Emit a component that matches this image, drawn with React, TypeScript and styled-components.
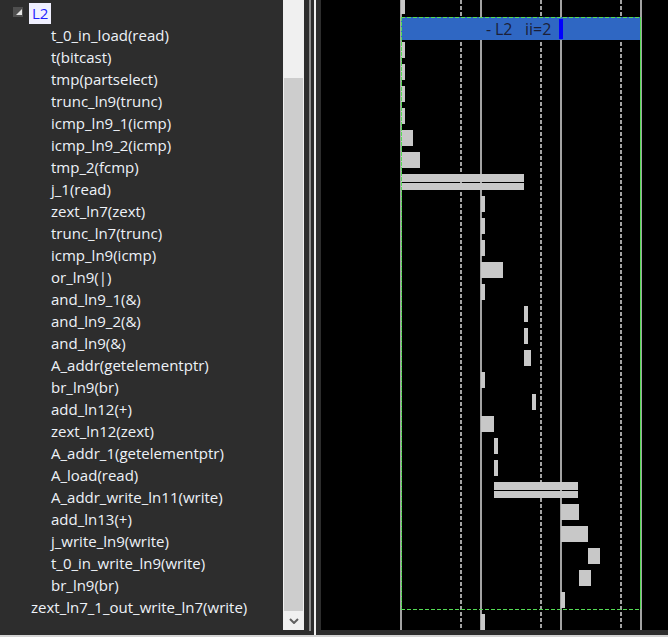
import React from "react";
import styled, { createGlobalStyle } from "styled-components";

const GlobalStyle = createGlobalStyle`
  html, body { margin: 0; padding: 0; background: #2d2d2d; }
  body { font-family: "Open Sans", "Noto Sans", sans-serif; }
`;

const Frame = styled.div`
  width: 668px;
  height: 637px;
  display: flex;
  flex-direction: column;
  background: #2d2d2d;
  overflow: hidden;
`;

const Main = styled.div`
  display: flex;
  flex-direction: row;
  height: 635px;
`;

const TreePanel = styled.div`
  width: 283px;
  height: 635px;
  padding-top: 2px;
  box-sizing: border-box;
  background: #2d2d2d;
  display: flex;
  flex-direction: column;
  overflow: hidden;
`;

const TreeRow = styled.div<{ $indent: number }>`
  height: 22px;
  display: flex;
  align-items: center;
  padding-left: ${(p) => p.$indent}px;
  color: #eef2f8;
  font-size: 15px;
  white-space: nowrap;
`;

const Expander = styled.div`
  width: 10px;
  height: 10px;
  margin-right: 6px;
  margin-top: -3px;
  background: #4f4f4f;
  position: relative;
  &::after {
    content: "";
    position: absolute;
    right: 1px;
    bottom: 2px;
    width: 0;
    height: 0;
    border-left: 6px solid transparent;
    border-bottom: 6px solid #e4e4e4;
  }
`;

const GroupLabel = styled.span`
  background: #f0f0ff;
  color: #1f1fff;
  height: 21px;
  line-height: 21px;
  padding: 0 3px;
  font-size: 15px;
`;

const ScrollColumn = styled.div`
  width: 21px;
  height: 635px;
  display: flex;
  flex-direction: column;
`;

const ScrollTrack = styled.div`
  height: 630px;
  background: #f0f0f0;
  display: flex;
  flex-direction: column;
`;

const ScrollSpace = styled.div`
  height: 78px;
`;

const ScrollThumb = styled.div`
  height: 533px;
  margin: 0 1px;
  background: #cdcdcd;
`;

const ScrollButton = styled.div`
  height: 19px;
  display: flex;
  align-items: center;
  justify-content: center;
`;

const Splitter = styled.div`
  width: 17px;
  height: 635px;
  display: flex;
  flex-direction: row;
  padding-left: 5px;
  box-sizing: border-box;
  gap: 3px;
`;

const SplitLine = styled.div<{ $color: string; $h: number }>`
  width: 2px;
  height: ${(p) => p.$h}px;
  background: ${(p) => p.$color};
`;

const TimelineColumn = styled.div`
  flex: 1;
  height: 635px;
  display: flex;
  flex-direction: column;
`;

const Chart = styled.div`
  height: 630px;
  background: #000;
  & svg { display: block; }
`;

const BottomLine = styled.div`
  height: 2px;
  background: #d4d4d4;
`;

const children = [
  "t_0_in_load(read)",
  "t(bitcast)",
  "tmp(partselect)",
  "trunc_ln9(trunc)",
  "icmp_ln9_1(icmp)",
  "icmp_ln9_2(icmp)",
  "tmp_2(fcmp)",
  "j_1(read)",
  "zext_ln7(zext)",
  "trunc_ln7(trunc)",
  "icmp_ln9(icmp)",
  "or_ln9(|)",
  "and_ln9_1(&)",
  "and_ln9_2(&)",
  "and_ln9(&)",
  "A_addr(getelementptr)",
  "br_ln9(br)",
  "add_ln12(+)",
  "zext_ln12(zext)",
  "A_addr_1(getelementptr)",
  "A_load(read)",
  "A_addr_write_ln11(write)",
  "add_ln13(+)",
  "j_write_ln9(write)",
  "t_0_in_write_ln9(write)",
  "br_ln9(br)",
];

type Bar = { y: number; x1: number; x2: number; dbl?: boolean };

const bars: Bar[] = [
  { y: -2, x1: 401, x2: 405 },
  { y: 42, x1: 401, x2: 405 },
  { y: 64, x1: 401, x2: 405 },
  { y: 86, x1: 401, x2: 405 },
  { y: 108, x1: 401, x2: 405 },
  { y: 130, x1: 401, x2: 413 },
  { y: 152, x1: 401, x2: 420 },
  { y: 174, x1: 401, x2: 524, dbl: true },
  { y: 196, x1: 481, x2: 485 },
  { y: 218, x1: 481, x2: 485 },
  { y: 240, x1: 481, x2: 485 },
  { y: 262, x1: 481, x2: 503 },
  { y: 284, x1: 481, x2: 485 },
  { y: 306, x1: 524, x2: 528 },
  { y: 328, x1: 524, x2: 528 },
  { y: 350, x1: 524, x2: 531 },
  { y: 372, x1: 481, x2: 485 },
  { y: 394, x1: 532, x2: 536 },
  { y: 416, x1: 481, x2: 494 },
  { y: 438, x1: 494, x2: 498 },
  { y: 460, x1: 494, x2: 498 },
  { y: 482, x1: 494, x2: 578, dbl: true },
  { y: 504, x1: 561, x2: 579 },
  { y: 526, x1: 561, x2: 588 },
  { y: 548, x1: 588, x2: 600 },
  { y: 570, x1: 579, x2: 591 },
  { y: 592, x1: 561, x2: 565 },
  { y: 614, x1: 481, x2: 485 },
];

const solidX = [401, 481, 561, 641];
const dashedX = [461, 541, 621];
const GREEN = "#55dd55";
const BAR = "#c8c8c8";

function Timeline() {
  return (
    <svg width={347} height={630} viewBox="321 0 347 630">
      {solidX.map((x) => (
        <rect key={"s" + x} x={x - 1} y={0} width={2} height={630} fill="#a3a3a3" />
      ))}
      {dashedX.map((x) => (
        <line
          key={"d" + x}
          x1={x}
          x2={x}
          y1={0}
          y2={630}
          stroke="#a3a3a3"
          strokeWidth={2}
          strokeDasharray="4 2"
        />
      ))}
      {bars.map((b, i) =>
        b.dbl ? (
          <g key={i}>
            <rect x={b.x1} y={b.y} width={b.x2 - b.x1} height={8} fill={BAR} />
            <rect x={b.x1} y={b.y + 9} width={b.x2 - b.x1} height={7} fill={BAR} />
          </g>
        ) : (
          <rect key={i} x={b.x1} y={b.y} width={b.x2 - b.x1} height={16} fill={BAR} />
        )
      )}
      <rect x={401} y={17} width={240} height={23} fill="#2f67c3" />
      <text
        y={35}
        fontSize={16}
        fill="#1b1f38"
        fontFamily='"Open Sans", "Noto Sans", sans-serif'
      >
        <tspan x={486}>-</tspan>
        <tspan x={495}>L2</tspan>
        <tspan x={525}>ii=2</tspan>
      </text>
      <line x1={401.5} x2={401.5} y1={17} y2={609} stroke={GREEN} strokeWidth={1} strokeDasharray="4 1" />
      <line x1={640.5} x2={640.5} y1={17} y2={609} stroke={GREEN} strokeWidth={1} />
      <line x1={401} x2={641} y1={17.5} y2={17.5} stroke={GREEN} strokeWidth={1} strokeDasharray="4 2" />
      <line x1={401} x2={641} y1={609.5} y2={609.5} stroke={GREEN} strokeWidth={1} strokeDasharray="4 2" />
      <rect x={559} y={19} width={4} height={20} fill="#0000ff" />
    </svg>
  );
}

export default function App() {
  return (
    <>
      <GlobalStyle />
      <Frame>
        <Main>
          <TreePanel>
            <TreeRow $indent={13}>
              <Expander />
              <GroupLabel>L2</GroupLabel>
            </TreeRow>
            {children.map((c, i) => (
              <TreeRow key={i} $indent={51}>
                {c}
              </TreeRow>
            ))}
            <TreeRow $indent={31}>zext_ln7_1_out_write_ln7(write)</TreeRow>
          </TreePanel>
          <ScrollColumn>
            <ScrollTrack>
              <ScrollSpace />
              <ScrollThumb />
              <ScrollButton>
                <svg width={10} height={6} viewBox="0 0 10 6">
                  <polyline points="1,1 5,5 9,1" fill="none" stroke="#606060" strokeWidth={2} />
                </svg>
              </ScrollButton>
            </ScrollTrack>
          </ScrollColumn>
          <Splitter>
            <SplitLine $color="#8a8a8a" $h={631} />
            <SplitLine $color="#f0f0f0" $h={635} />
          </Splitter>
          <TimelineColumn>
            <Chart>
              <Timeline />
            </Chart>
          </TimelineColumn>
        </Main>
        <BottomLine />
      </Frame>
    </>
  );
}
